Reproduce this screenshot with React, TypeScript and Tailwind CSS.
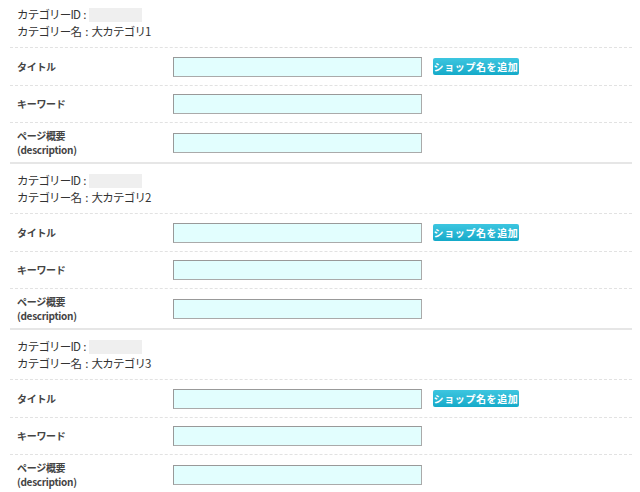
const categories = [
  { name: "大カテゴリ1" },
  { name: "大カテゴリ2" },
  { name: "大カテゴリ3" },
];

const FONT = { fontFamily: '"Noto Sans CJK JP", "Liberation Sans", sans-serif' };

export default function App() {
  return (
    <div className="min-h-screen bg-white text-[#333]" style={FONT}>
      <div className="ml-[10px] w-[622px]">
        {categories.map((c, i) => (
          <Section key={i} name={c.name} first={i === 0} />
        ))}
      </div>
    </div>
  );
}

function Section({ name, first }: { name: string; first: boolean }) {
  return (
    <div className={first ? "" : "border-t-2 border-[#e6e6e6]"}>
      {/* カテゴリ情報 */}
      <div
        className={`${first ? "pt-[6px]" : "pt-[8px]"} pb-[7px] pl-[7px] text-[11.5px] leading-[17px] tracking-[-0.8px]`}
      >
        <div className="flex items-center">
          <span>カテゴリーID</span>
          <span className="ml-[3px]">:</span>
          <span className="ml-[3px] inline-block h-[14px] w-[53px] bg-[#efefef]" />
        </div>
        <div className="flex items-center">
          <span>カテゴリー名</span>
          <span className="mx-[4px]">:</span>
          <span>{name}</span>
        </div>
      </div>

      <Row label="タイトル" h="h-[38px]" button />
      <Row label="キーワード" h="h-[37px]" />
      <Row label={["ページ概要", "(description)"]} h="h-[40px]" />
    </div>
  );
}

function Row({
  label,
  h,
  button,
}: {
  label: string | string[];
  h: string;
  button?: boolean;
}) {
  return (
    <div className={`flex items-center border-t border-dashed border-[#e2e2e2] ${h}`}>
      <div className="w-[163px] pl-[7px] text-[10px] font-bold leading-[14px] tracking-[-0.3px] text-[#444]">
        {Array.isArray(label) ? label.map((l) => <div key={l}>{l}</div>) : label}
      </div>
      <input
        type="text"
        className="h-[20px] w-[249px] border border-[#aaa] border-t-[#999] border-l-[#999] bg-[#e2fefe] outline-none"
      />
      {button && (
        <button className="ml-[11px] h-[17px] w-[86px] rounded-[2px] bg-gradient-to-b from-[#3cc6e0] to-[#13aac9] text-[10px] font-bold leading-[17px] tracking-[0.6px] text-white">
          ショップ名を追加
        </button>
      )}
    </div>
  );
}
